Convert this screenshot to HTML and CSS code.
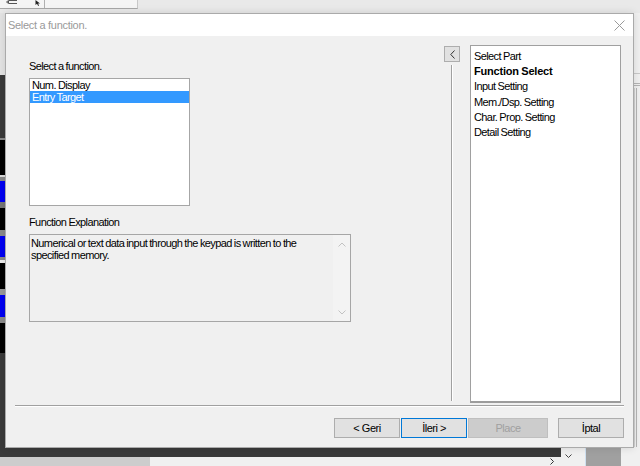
FILE: index.html
```html
<!DOCTYPE html>
<html lang="en">

<head>
  <meta charset="UTF-8" />
  <meta name="viewport" content="width=device-width, initial-scale=1.0" />
  <title>Select a function.</title>
  <link rel="stylesheet" href="styles.css">
</head>

<body>
  <!-- editor window behind the dialog -->
  <div class="app">
    <div class="app-top">
      <div class="toolbar">
        <span class="tool">
          <svg width="12" height="6" viewBox="0 0 12 6"><path d="M3 0.5H11M3 3.5H11M0.5 2L2.5 0.5V3.5Z" stroke="#555" fill="none" /></svg>
        </span>
        <span class="tool tool-cursor">
          <svg width="6" height="6" viewBox="0 0 6 6"><path d="M0.5 0V5L2 3.8L3.2 6L4 5.6L3 3.4H5Z" fill="#222" /></svg>
        </span>
      </div>
    </div>
    <div class="app-middle">
      <div class="strip-left"></div>
      <div class="app-canvas"></div>
      <div class="strip-right"></div>
    </div>
    <div class="app-bottom">
      <div class="app-bottom-left">
        <div class="dark-band"></div>
        <div class="hscroll">
          <span class="hscroll-thumb"></span>
          <svg class="hscroll-arrow" width="5" height="7" viewBox="0 0 5 7"><path d="M0.5 0.5L3.5 3.5L0.5 6.5" stroke="#333" fill="none" /></svg>
        </div>
      </div>
      <div class="app-bottom-right">
        <span class="down-arrow">
          <svg width="7" height="5" viewBox="0 0 7 5"><path d="M0.5 0.5L3.5 3.5L6.5 0.5" stroke="#444" fill="none" /></svg>
        </span>
        <span class="gray-block"></span>
      </div>
    </div>
  </div>

  <div class="dialog">
    <div class="dialog-title">
      <span>Select a function.</span>
      <svg class="close" width="11" height="11" viewBox="0 0 11 11">
        <path d="M0.5 0.5L10.5 10.5M10.5 0.5L0.5 10.5" stroke="#9a9a9a" stroke-width="1" />
      </svg>
    </div>

    <div class="dialog-body">
      <div class="wizard">
        <div class="page">
          <div class="caption">Select a function.</div>
          <ul class="listbox">
            <li>Num. Display</li>
            <li class="selected">Entry Target</li>
          </ul>
          <div class="caption caption-explain">Function Explanation</div>
          <div class="textbox">
            <p>Numerical or text data input through the keypad is written to the specified memory.</p>
            <div class="vscroll">
              <svg width="8" height="5" viewBox="0 0 8 5"><path d="M0.5 4.5L4 1L7.5 4.5" stroke="#c2c2c2" fill="none" /></svg>
              <svg width="8" height="5" viewBox="0 0 8 5"><path d="M0.5 0.5L4 4L7.5 0.5" stroke="#c2c2c2" fill="none" /></svg>
            </div>
          </div>
        </div>

        <div class="steps-nav">
          <button class="collapse">
            <svg width="5" height="9" viewBox="0 0 5 9"><path d="M4.5 0.5L0.8 4.5L4.5 8.5" stroke="#333" fill="none" /></svg>
          </button>
          <div class="etched-v"></div>
        </div>

        <ul class="steps">
          <li>Select Part</li>
          <li class="current">Function Select</li>
          <li>Input Setting</li>
          <li>Mem./Dsp. Setting</li>
          <li>Char. Prop. Setting</li>
          <li>Detail Setting</li>
        </ul>
      </div>

      <div class="etched-h"></div>

      <div class="buttons">
        <button class="btn">&lt; Geri</button>
        <button class="btn btn-default">İleri &gt;</button>
        <button class="btn btn-wide" disabled>Place</button>
        <button class="btn btn-cancel">İptal</button>
      </div>
    </div>
  </div>
</body>

</html>
```

FILE: styles.css
```css
* {
  box-sizing: border-box;
}

body {
  margin: 0;
  width: 640px;
  height: 466px;
  overflow: hidden;
  position: relative;
  font-family: "Liberation Sans", Arial, sans-serif;
  font-size: 11px;
  letter-spacing: -0.6px;
  word-spacing: -0.4px;
  color: #000;
  background: #f0f0f0;
}

ul {
  margin: 0;
  padding: 0;
  list-style: none;
}

/* ---------- editor behind ---------- */

.app {
  display: flex;
  flex-direction: column;
  height: 466px;
}

.app-top {
  height: 13px;
  background: #e9e9e9;
}

.toolbar {
  width: 138px;
  height: 9px;
  background: #f5f5f5;
  border-bottom: 1px solid #a8a8a8;
  border-right: 1px solid #c8c8c8;
  display: flex;
  align-items: flex-start;
}

.tool {
  display: flex;
  width: 45px;
  padding-left: 6px;
  border-right: 1px solid #b0b0b0;
  height: 8px;
}

.tool-cursor {
  width: auto;
  border-right: none;
  padding-left: 0;
  margin-left: -10px;
}

.app-middle {
  flex: 1;
  display: flex;
}

.strip-left {
  width: 5px;
  background: linear-gradient(to bottom,
      #e4e4e4 0 62px,
      #3a3a3a 62px 125px,
      #8a8a8a 125px 127px,
      #000 127px 162px,
      #dcdcdc 162px 164px,
      #8a8a8a 164px 168px,
      #0000f2 168px 189px,
      #777 189px 195px,
      #000 195px 217px,
      #8a8a8a 217px 223px,
      #0000f2 223px 244px,
      #8a8a8a 244px 247px,
      #eee 247px 250px,
      #000 250px 276px,
      #999 276px 282px,
      #0000f2 282px 304px,
      #8a8a8a 304px 310px,
      #000 310px 340px,
      #3a3a3a 340px);
}

.app-canvas {
  flex: 1;
}

.strip-right {
  width: 7px;
  background:
    linear-gradient(to right, transparent 0 1px, #d0d0d0 1px 2px, transparent 2px 3px, #b4b4b4 3px 4px, transparent 4px) 0 75px / 7px 100% no-repeat,
    linear-gradient(to bottom, transparent 0 60px, #c8c8c8 60px 61px, transparent 61px 70px, #b4b4b4 70px 71px, transparent 71px 72px, #b4b4b4 72px 73px, transparent 73px);
}

.app-bottom {
  height: 19px;
  display: flex;
}

.app-bottom-left {
  width: 561px;
  display: flex;
  flex-direction: column;
}

.dark-band {
  height: 10px;
  background: #3a3a3a;
}

.hscroll {
  flex: 1;
  display: flex;
  align-items: center;
  background: #f0f0f0;
}

.hscroll-thumb {
  width: 150px;
  height: 100%;
  background: #cdcdcd;
}

.hscroll-arrow {
  margin-left: auto;
  margin-right: 6px;
}

.app-bottom-right {
  flex: 1;
  display: flex;
}

.down-arrow {
  width: 24px;
  padding: 2px 0 0 4px;
}

.gray-block {
  width: 36px;
  background: #a0a0a0;
  border-left: 1px solid #cfe0f0;
}

/* ---------- dialog ---------- */

.dialog {
  position: absolute;
  left: 5px;
  top: 13px;
  width: 629px;
  height: 435px;
  border: 1px solid #aaaaaa;
  background: #f0f0f0;
  box-shadow: 0 0 8px rgba(0, 0, 0, 0.12);
  display: flex;
  flex-direction: column;
}

.dialog-title {
  height: 22px;
  background: #fff;
  color: #9a9a9a;
  display: flex;
  align-items: center;
  padding: 0 8px 0 2px;
  letter-spacing: -0.3px;
  word-spacing: 0;
}

.dialog-title .close {
  margin-left: auto;
  margin-top: 1px;
}

.dialog-body {
  flex: 1;
  display: flex;
  flex-direction: column;
  padding: 9px 9px 0 9px;
}

.wizard {
  height: 358px;
  display: flex;
}

.page {
  width: 322px;
  margin-left: 14px;
  padding-top: 15px;
  display: flex;
  flex-direction: column;
}

.caption {
  line-height: 13px;
  margin-bottom: 5px;
}

.caption-explain {
  margin-top: 10px;
}

.listbox {
  width: 161px;
  height: 128px;
  background: #fff;
  border: 1px solid #a6a6a6;
}

.listbox li {
  height: 12px;
  line-height: 12px;
  padding-left: 2px;
}

.listbox li.selected {
  background: #3399ff;
  color: #fff;
}

.textbox {
  height: 88px;
  border: 1px solid #a6a6a6;
  display: flex;
}

.textbox p {
  flex: 1;
  margin: 0;
  padding: 2px 1px;
  line-height: 12px;
}

.vscroll {
  width: 17px;
  background: #f3f3f3;
  display: flex;
  flex-direction: column;
  justify-content: space-between;
  align-items: center;
  padding: 7px 0 6px;
}

.steps-nav {
  margin-left: auto;
  margin-right: 10px;
  width: 16px;
  display: flex;
  flex-direction: column;
  align-items: center;
}

.collapse {
  width: 16px;
  height: 16px;
  margin-top: 1px;
  padding: 0;
  border: 1px solid #adadad;
  background: #e1e1e1;
  display: flex;
  align-items: center;
  justify-content: center;
}

.etched-v {
  width: 2px;
  flex: 1;
  margin: 3px 0 2px;
  border-left: 1px solid #a0a0a0;
  border-right: 1px solid #fff;
}

.steps {
  width: 151px;
  margin-right: 3px;
  background: #fff;
  border: 1px solid #a0a0a0;
  border-bottom: 2px solid #9c9c9c;
  padding: 3px 3px;
}

.steps li {
  line-height: 15.2px;
}

.steps li.current {
  font-weight: bold;
  letter-spacing: -0.2px;
}

.etched-h {
  height: 2px;
  margin-top: 2px;
  border-top: 1px solid #a0a0a0;
  border-bottom: 1px solid #fff;
}

.buttons {
  margin-top: 11px;
  display: flex;
  justify-content: flex-end;
  gap: 1px;
}

.btn {
  width: 66px;
  height: 20px;
  padding: 0;
  border: 1px solid #adadad;
  background: #e1e1e1;
  font-family: inherit;
  font-size: 11px;
  letter-spacing: -0.5px;
  word-spacing: 0;
  color: #000;
}

.btn-default {
  border-color: #0078d7;
}

.btn-wide {
  width: 80px;
}

.btn:disabled {
  background: #cccccc;
  border-color: #bfbfbf;
  color: #a0a0a0;
}

.btn-cancel {
  margin-left: 9px;
}
```
